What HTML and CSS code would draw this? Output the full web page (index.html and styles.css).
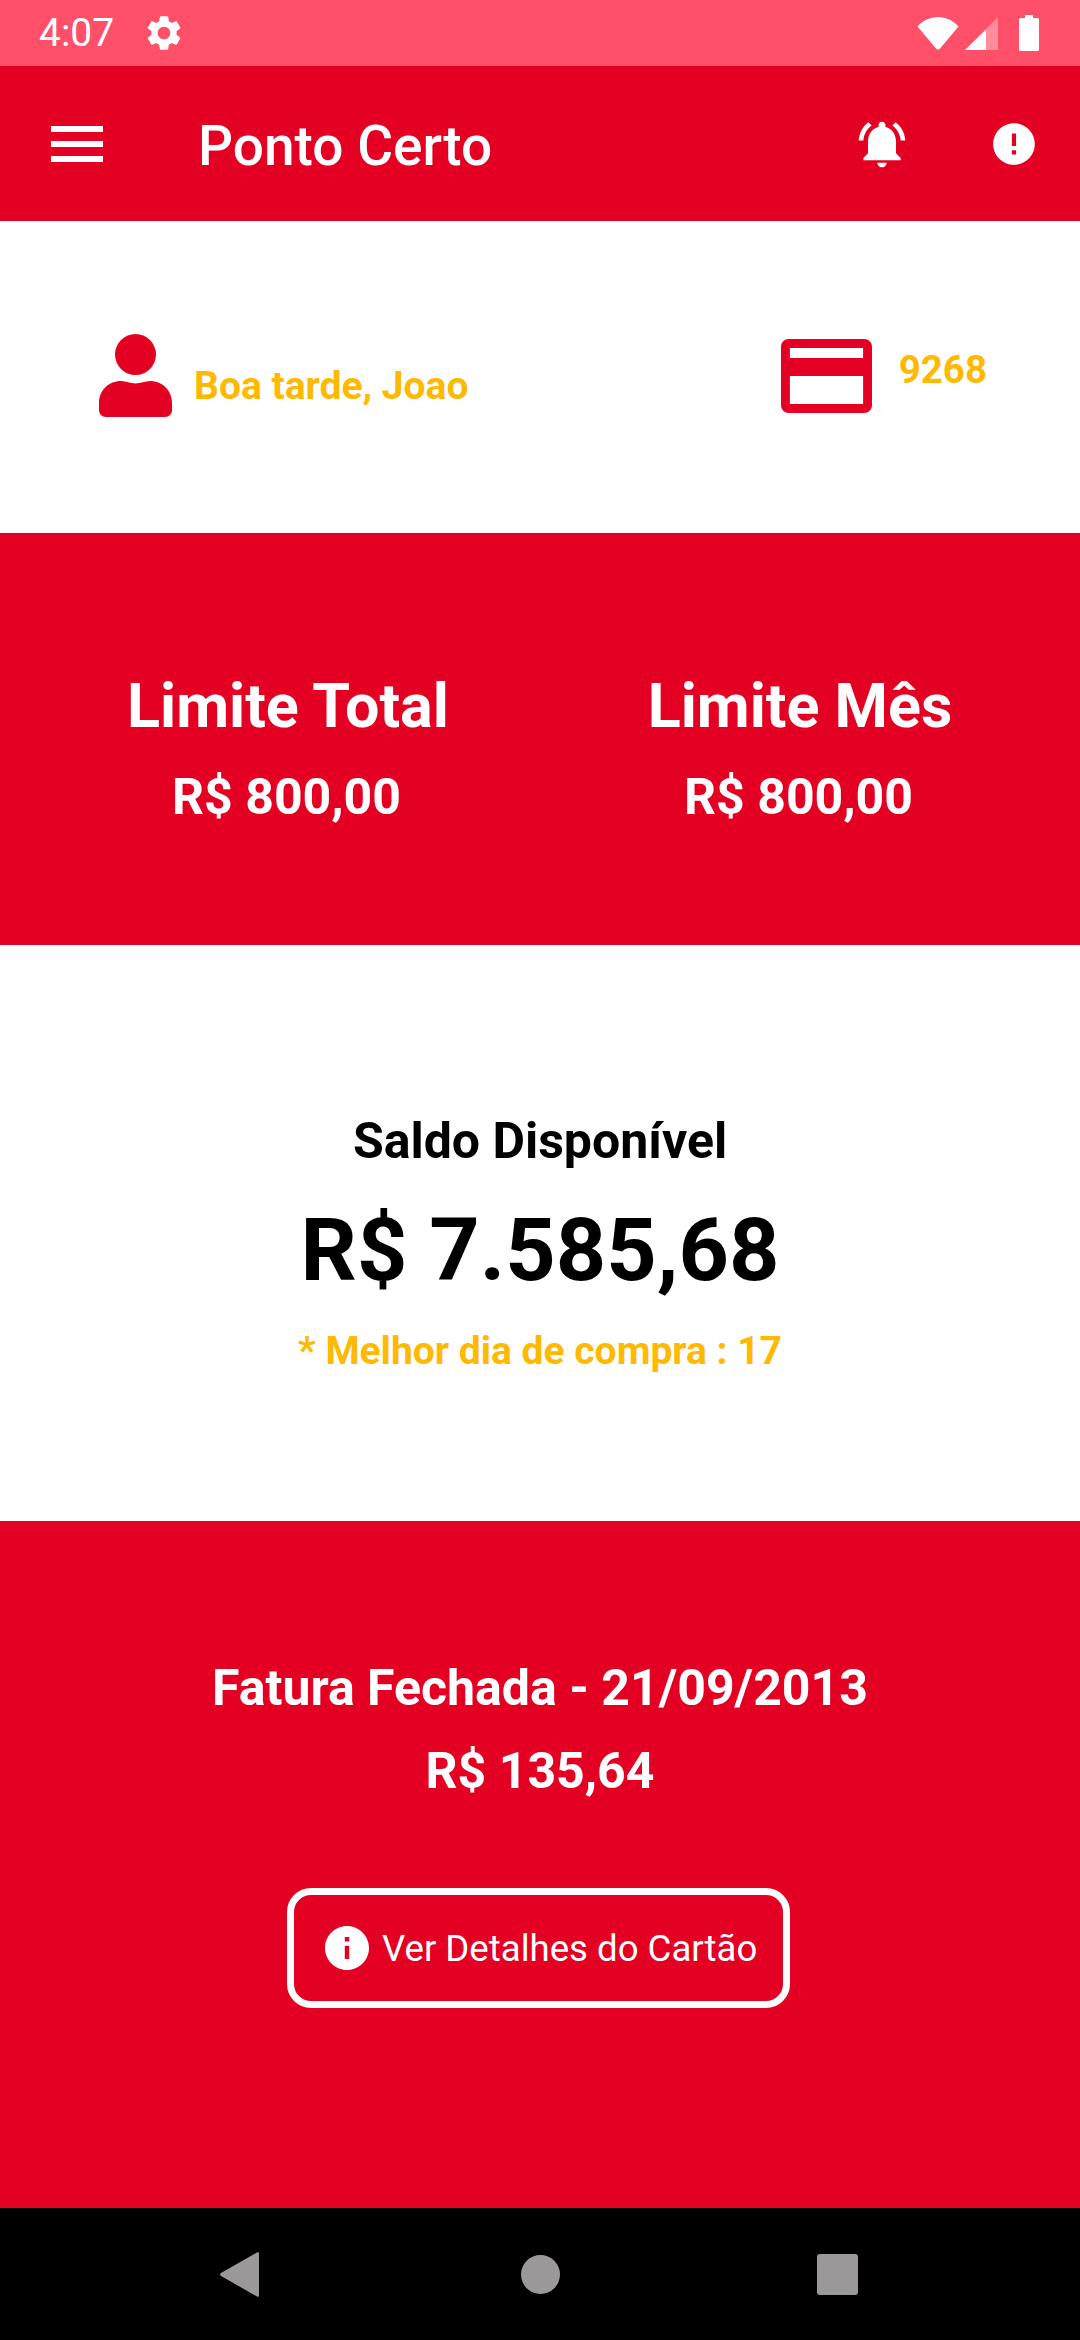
FILE: index.html
```html
<!DOCTYPE html>
<html lang="pt">
<head>
    <meta charset="UTF-8">
    <meta name="viewport" content="width=device-width, initial-scale=1.0">
    <title>Ponto Certo</title>
    <link rel="stylesheet" href="styles.css">
</head>
<body>
    <div class="status-bar">
        <span class="clock">4:07</span>
        <svg class="gear" viewBox="0 0 24 24"><path d="M19.14 12.94c.04-.3.06-.61.06-.94 0-.32-.02-.64-.07-.94l2.03-1.58c.18-.14.23-.41.12-.61l-1.92-3.32c-.12-.22-.37-.29-.59-.22l-2.39.96c-.5-.38-1.03-.7-1.62-.94l-.36-2.54c-.04-.24-.24-.41-.48-.41h-3.84c-.24 0-.43.17-.47.41l-.36 2.54c-.59.24-1.13.57-1.62.94l-2.39-.96c-.22-.08-.47 0-.59.22L2.74 8.87c-.12.21-.08.47.12.61l2.03 1.58c-.05.3-.09.63-.09.94s.02.64.07.94l-2.03 1.58c-.18.14-.23.41-.12.61l1.92 3.32c.12.22.37.29.59.22l2.39-.96c.5.38 1.03.7 1.62.94l.36 2.54c.05.24.24.41.48.41h3.84c.24 0 .44-.17.47-.41l.36-2.54c.59-.24 1.13-.56 1.62-.94l2.39.96c.22.08.47 0 .59-.22l1.92-3.32c.12-.22.07-.47-.12-.61l-2.01-1.58zM12 15.6c-1.98 0-3.6-1.62-3.6-3.6s1.62-3.6 3.6-3.6 3.6 1.62 3.6 3.6-1.62 3.6-3.6 3.6z"/></svg>
        <div class="status-icons">
            <svg class="wifi" viewBox="0 0 42 33"><path d="M0.5 9.5C6 3.5 13 0 21 0s15 3.5 20.5 9.500L23 31.500c-1 1.300-3 1.300-4 0z"/></svg>
            <svg class="signal" viewBox="0 0 33 33"><path class="signal-empty" d="M33 0V33H0z"/><path d="M21 12.500V33H0z"/></svg>
            <svg class="battery" viewBox="0 0 20 36"><path d="M6 0h8v3h4.500c.8 0 1.500.7 1.500 1.500V34.500c0 .8-.7 1.500-1.500 1.500H1.500C.7 36 0 35.300 0 34.500V4.500C0 3.700.7 3 1.500 3H6z"/></svg>
        </div>
    </div>

    <header class="app-bar">
        <div class="menu-icon"><span></span><span></span><span></span></div>
        <h1 class="app-title">Ponto Certo</h1>
        <svg class="bell" viewBox="0 0 24 24"><path d="M7.580 4.080L6.150 2.650C3.750 4.480 2.170 7.300 2.030 10.500h2c.15-2.650 1.510-4.970 3.550-6.420zm12.390 6.420h2c-.15-3.200-1.730-6.020-4.120-7.850l-1.420 1.430c2.020 1.450 3.390 3.770 3.540 6.420zM18 11c0-3.070-1.640-5.640-4.500-6.320V4c0-.83-.67-1.500-1.500-1.500s-1.500.67-1.500 1.500v.68C7.630 5.360 6 7.920 6 11v5l-2 2v1h16v-1l-2-2v-5zm-6 11c.14 0 .27-.01.4-.04.65-.14 1.180-.58 1.440-1.180.1-.24.15-.5.15-.78h-4c.01 1.100.9 2 2.010 2z"/></svg>
        <svg class="alert" viewBox="0 0 24 24"><path d="M12 2C6.480 2 2 6.480 2 12s4.480 10 10 10 10-4.480 10-10S17.520 2 12 2zm1 15h-2v-2h2v2zm0-4h-2V7h2v6z"/></svg>
    </header>

    <section class="greeting">
        <div class="user">
            <svg class="person" viewBox="0 0 73 83"><circle cx="36.500" cy="20.500" r="20.500"/><path d="M0 69C0 56 10 47 22 47c5 0 9 2.500 14.500 2.500S46 47 51 47c12 0 22 9 22 22v7c0 4-3 7-7 7H7c-4 0-7-3-7-7z"/></svg>
            <span class="hello">Boa tarde, Joao</span>
        </div>
        <div class="card">
            <svg class="card-icon" viewBox="0 0 92 74" preserveAspectRatio="none"><path fill-rule="evenodd" d="M8 0H84c4.500 0 8 3.500 8 8V66c0 4.500-3.500 8-8 8H8c-4.500 0-8-3.500-8-8V8C0 3.500 3.500 0 8 0zM9 9V19H83V9zM9 37V65H83V37z"/></svg>
            <span class="card-number">9268</span>
        </div>
    </section>

    <section class="limits">
        <div class="limit">
            <div class="limit-title">Limite Total</div>
            <div class="limit-value">R$ 800,00</div>
        </div>
        <div class="limit">
            <div class="limit-title">Limite Mês</div>
            <div class="limit-value">R$ 800,00</div>
        </div>
    </section>

    <section class="balance">
        <div class="balance-label">Saldo Disponível</div>
        <div class="balance-value">R$ 7.585,68</div>
        <div class="best-day">* Melhor dia de compra : 17</div>
    </section>

    <section class="invoice">
        <div class="invoice-title">Fatura Fechada - 21/09/2013</div>
        <div class="invoice-value">R$ 135,64</div>
        <button class="details" type="button">
            <svg class="info" viewBox="2 2 20 20"><path d="M12 2C6.480 2 2 6.480 2 12s4.480 10 10 10 10-4.480 10-10S17.520 2 12 2zm1 15h-2v-6h2v6zm0-8h-2V7h2v2z"/></svg>
            Ver Detalhes do Cartão
        </button>
    </section>

    <nav class="nav-bar">
        <svg class="nav-back" viewBox="0 0 39 45"><path d="M37 0.500c1-.7 2-.2 2 1V43.500c0 1.200-1 1.700-2 1L1 24c-1.300-.8-1.300-2.200 0-3z"/></svg>
        <span class="nav-home"></span>
        <span class="nav-recent"></span>
    </nav>
</body>
</html>
```

FILE: styles.css
```css
* {
    box-sizing: border-box;
}
body {
    margin: 0;
    width: 1080px;
    height: 2340px;
    font-family: Roboto, "Liberation Sans", sans-serif;
    background-color: #fff;
    display: flex;
    flex-direction: column;
}
svg {
    display: block;
    fill: #fff;
    flex: none;
}

/* status bar */
.status-bar {
    height: 66px;
    background-color: #ff4f69;
    color: #fff;
    display: flex;
    align-items: center;
    padding: 0 41px 0 39px;
}
.clock {
    font-size: 39px;
    line-height: 66px;
}
.gear {
    width: 42px;
    height: 42px;
    margin-left: 29px;
}
.status-icons {
    margin-left: auto;
    display: flex;
    align-items: center;
}
.wifi {
    width: 42px;
    height: 33px;
}
.signal {
    width: 33px;
    height: 33px;
    margin-left: 6px;
}
.signal-empty {
    opacity: 0.35;
}
.battery {
    width: 20px;
    height: 36px;
    margin-left: 21px;
}

/* app bar */
.app-bar {
    height: 155px;
    background-color: #e40022;
    color: #fff;
    display: flex;
    align-items: center;
    padding-left: 51px;
}
.menu-icon {
    width: 52px;
    display: flex;
    flex-direction: column;
    gap: 9px;
}
.menu-icon span {
    height: 6px;
    background-color: #fff;
}
.app-title {
    margin: 4px 0 0 95px;
    font-size: 55px;
    font-weight: 500;
}
.bell {
    width: 56px;
    height: 56px;
    margin-left: auto;
}
.alert {
    width: 50px;
    height: 50px;
    margin: 0 41px 0 79px;
}

/* greeting */
.greeting {
    height: 312px;
    display: flex;
    justify-content: space-between;
    padding: 113px 93px 0 99px;
}
.user {
    display: flex;
    align-items: flex-end;
    height: 83px;
}
.person {
    width: 73px;
    height: 83px;
    fill: #e40022;
}
.hello {
    margin: 0 0 8px 22px;
    font-size: 39px;
    font-weight: 700;
    color: #ffb900;
}
.card {
    display: flex;
    height: 74px;
    margin-top: 5px;
}
.card-icon {
    width: 91px;
    height: 74px;
    fill: #e40022;
}
.card-number {
    margin: 8px 0 0 27px;
    font-size: 38.5px;
    font-weight: 700;
    color: #ffb900;
}

/* limits */
.limits {
    height: 412px;
    background-color: #e40022;
    color: #fff;
    display: grid;
    grid-template-columns: 1fr 1fr;
    padding: 18px 24px 0 32px;
    align-items: center;
    text-align: center;
}
.limit-title {
    font-size: 61px;
    font-weight: 700;
}
.limit-value {
    margin: 26px 3px 0 0;
    font-size: 50px;
    font-weight: 700;
}

/* balance */
.balance {
    height: 576px;
    padding-top: 20px;
    display: flex;
    flex-direction: column;
    align-items: center;
    justify-content: center;
}
.balance-label {
    font-size: 50px;
    font-weight: 700;
    color: #000;
}
.balance-value {
    font-size: 88px;
    font-weight: 700;
    color: #000;
    margin-top: 28px;
}
.best-day {
    font-size: 39px;
    font-weight: 700;
    color: #ffb900;
    margin-top: 27px;
}

/* invoice */
.invoice {
    height: 687px;
    background-color: #e40022;
    color: #fff;
    display: flex;
    flex-direction: column;
    align-items: center;
    padding-top: 138px;
}
.invoice-title {
    font-size: 50px;
    font-weight: 700;
}
.invoice-value {
    margin-top: 25px;
    font-size: 50px;
    font-weight: 700;
}
.details {
    margin: 88px 3px 0 0;
    width: 503px;
    height: 120px;
    border: 7px solid #fff;
    border-radius: 24px;
    background-color: transparent;
    color: #fff;
    font-family: inherit;
    font-size: 36.6px;
    display: flex;
    align-items: center;
    gap: 13px;
    padding: 0 0 0 31px;
}
.info {
    width: 44px;
    height: 44px;
}

/* navigation bar */
.nav-bar {
    height: 132px;
    background-color: #000;
    display: flex;
    align-items: center;
    padding-left: 220px;
}
.nav-back {
    width: 39px;
    height: 45px;
    fill: #9a9898;
}
.nav-home {
    width: 39px;
    height: 39px;
    margin-left: 262px;
    border-radius: 50%;
    background-color: #9a9898;
}
.nav-recent {
    width: 41px;
    height: 41px;
    margin-left: 257px;
    border-radius: 3px;
    background-color: #9a9898;
}
```
